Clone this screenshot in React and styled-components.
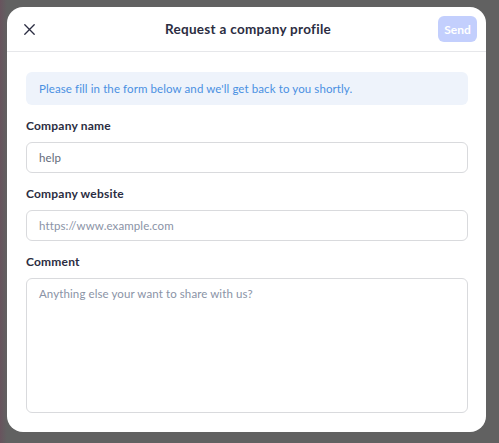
import styled, { createGlobalStyle } from 'styled-components'

const GlobalStyle = createGlobalStyle`
  html, body {
    margin: 0;
    padding: 0;
    height: 100%;
  }
  body {
    font-family: Lato, "Noto Sans", sans-serif;
  }
  #root {
    height: 100%;
  }
`

export default function App () {
  return (
    <>
      <GlobalStyle />
      <Backdrop>
        <Modal>
          <Header>
            <CloseButton aria-label='close'>
              <svg width='11' height='11' viewBox='0 0 11 11'>
                <path d='M0.8 0.8L10.2 10.2M10.2 0.8L0.8 10.2' stroke='#2b2d42' strokeWidth='1.3' strokeLinecap='round' />
              </svg>
            </CloseButton>
            <Title>Request a company profile</Title>
            <SendButton disabled>Send</SendButton>
          </Header>

          <Body>
            <Notice>
              Please fill in the form below and we'll get back to you shortly.
            </Notice>

            <Field>
              <Label>Company name</Label>
              <Input defaultValue='help' />
            </Field>

            <Field>
              <Label>Company website</Label>
              <Input placeholder='https://www.example.com' />
            </Field>

            <Field>
              <Label>Comment</Label>
              <TextArea placeholder='Anything else your want to share with us?' />
            </Field>
          </Body>
        </Modal>
      </Backdrop>
    </>
  )
}

const Backdrop = styled.div`
  height: 100%;
  box-sizing: border-box;
  padding: 7px 13px 11px 7px;
  background:
    linear-gradient(90deg, rgba(110, 70, 90, 0.5) 0px, rgba(97, 97, 97, 0) 7px),
    #616161;
`

const Modal = styled.div`
  background: #fff;
  border-radius: 16px;
  height: 425px;
  display: flex;
  flex-direction: column;
  overflow: hidden;
`

const Header = styled.div`
  height: 44px;
  border-bottom: 1px solid #e6e7ea;
  display: grid;
  grid-template-columns: 60px 1fr 60px;
  align-items: center;
  padding: 0 9px 0 12px;
`

const CloseButton = styled.button`
  width: 20px;
  height: 20px;
  padding: 0;
  border: none;
  background: none;
  display: flex;
  align-items: center;
  justify-content: center;
  cursor: pointer;
`

const Title = styled.h1`
  margin: 0;
  text-align: center;
  font-size: 13.5px;
  font-weight: 700;
  color: #2b2d42;
  letter-spacing: 0.3px;
`

const SendButton = styled.button`
  justify-self: end;
  width: 39px;
  height: 26px;
  border: none;
  border-radius: 6px;
  background: #c3cffd;
  color: #fff;
  font-family: inherit;
  font-size: 12px;
  font-weight: 700;
  padding: 0;
`

const Body = styled.div`
  flex: 1;
  display: flex;
  flex-direction: column;
  gap: 13px;
  padding: 20px 18px 19px 19px;
`

const Notice = styled.div`
  height: 33px;
  display: flex;
  align-items: center;
  padding: 0 13px;
  border-radius: 6px;
  background: #eef3fb;
  color: #4a90e2;
  font-size: 11.5px;
  letter-spacing: 0.1px;
`

const Field = styled.div`
  display: flex;
  flex-direction: column;
  gap: 8px;
  &:last-child {
    flex: 1;
  }
`

const Label = styled.label`
  font-size: 12px;
  line-height: 16px;
  font-weight: 700;
  color: #2b2d42;
  letter-spacing: 0.2px;
`

const fieldBase = `
  box-sizing: border-box;
  width: 100%;
  border: 1px solid #d9dadd;
  border-radius: 6px;
  background: #fff;
  font-family: Lato, "Noto Sans", sans-serif;
  font-size: 11.5px;
  letter-spacing: 0.1px;
  color: #646b7a;
  outline: none;
  &::placeholder {
    color: #8a93a6;
  }
`

const Input = styled.input`
  ${fieldBase}
  height: 31px;
  padding: 0 12px;
`

const TextArea = styled.textarea`
  ${fieldBase}
  flex: 1;
  resize: none;
  padding: 8px 12px;
`
